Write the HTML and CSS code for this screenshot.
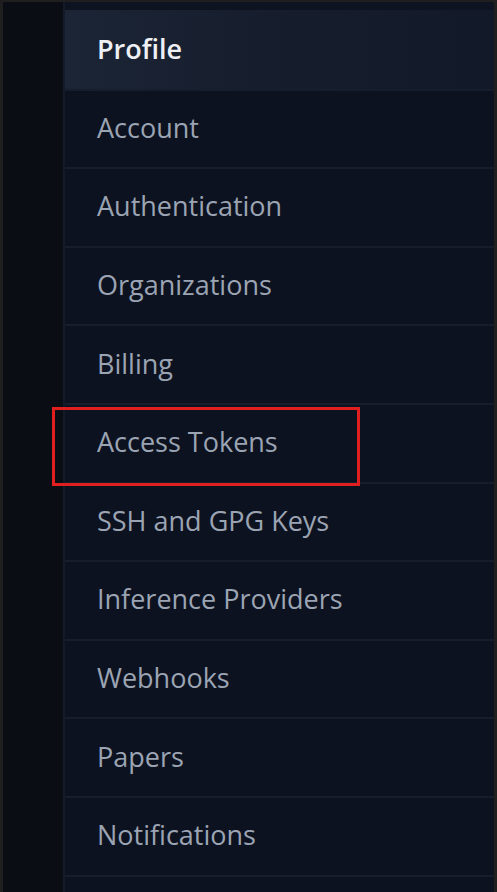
FILE: index.html
```html
<!DOCTYPE html>
<html lang="en">
<head>
<meta charset="utf-8">
<title>Settings</title>
<link rel="stylesheet" href="styles.css">
</head>
<body>
<div class="frame">
  <div class="rail"></div>
  <nav class="menu">
    <div class="menu-top"></div>
    <a class="item active" href="#">Profile</a>
    <a class="item" href="#">Account</a>
    <a class="item" href="#">Authentication</a>
    <a class="item" href="#">Organizations</a>
    <a class="item" href="#">Billing</a>
    <a class="item highlighted" href="#">Access Tokens</a>
    <a class="item" href="#">SSH and GPG Keys</a>
    <a class="item" href="#">Inference Providers</a>
    <a class="item" href="#">Webhooks</a>
    <a class="item" href="#">Papers</a>
    <a class="item" href="#">Notifications</a>
    <div class="menu-rest"></div>
  </nav>
</div>
</body>
</html>
```

FILE: styles.css
```css
*, *::before, *::after { box-sizing: border-box; }
html, body { margin: 0; padding: 0; }
body {
  background: #1f1f1f;
  width: 497px;
  height: 892px;
  overflow: hidden;
  font-family: "Open Sans", "Noto Sans", sans-serif;
}
.frame {
  display: flex;
  margin: 2px 3px 0 3px;
  height: 890px;
  background: #0b0e16;
}
.rail {
  width: 62px;
  flex: none;
  background: #0a0d14;
  border-right: 2px solid #141b28;
}
.menu {
  flex: 1;
  display: flex;
  flex-direction: column;
  background: #0d1220;
}
.menu-top {
  height: 8px;
  flex: none;
  background: #0e1321;
}
.item {
  position: relative;
  flex: none;
  height: 78.6px;
  display: flex;
  align-items: center;
  padding-left: 32px;
  padding-bottom: 3px;
  font-size: 27px;
  color: #9ba4b3;
  text-decoration: none;
  border-bottom: 2px solid #161d2c;
  background: #0d1220;
}
.item.active {
  height: 80.6px;
  padding-bottom: 1px;
  color: #eef0f4;
  font-weight: 600;
  background: linear-gradient(90deg, #1c2535 0%, #161e2e 45%, #121a2a 100%);
}
.item.highlighted { z-index: 2; }
.item.highlighted::after {
  content: "";
  position: absolute;
  left: -13px;
  top: 2px;
  width: 308px;
  height: 79px;
  border: 3px solid #e11f1f;
}
.menu-rest { flex: 1; }
```
